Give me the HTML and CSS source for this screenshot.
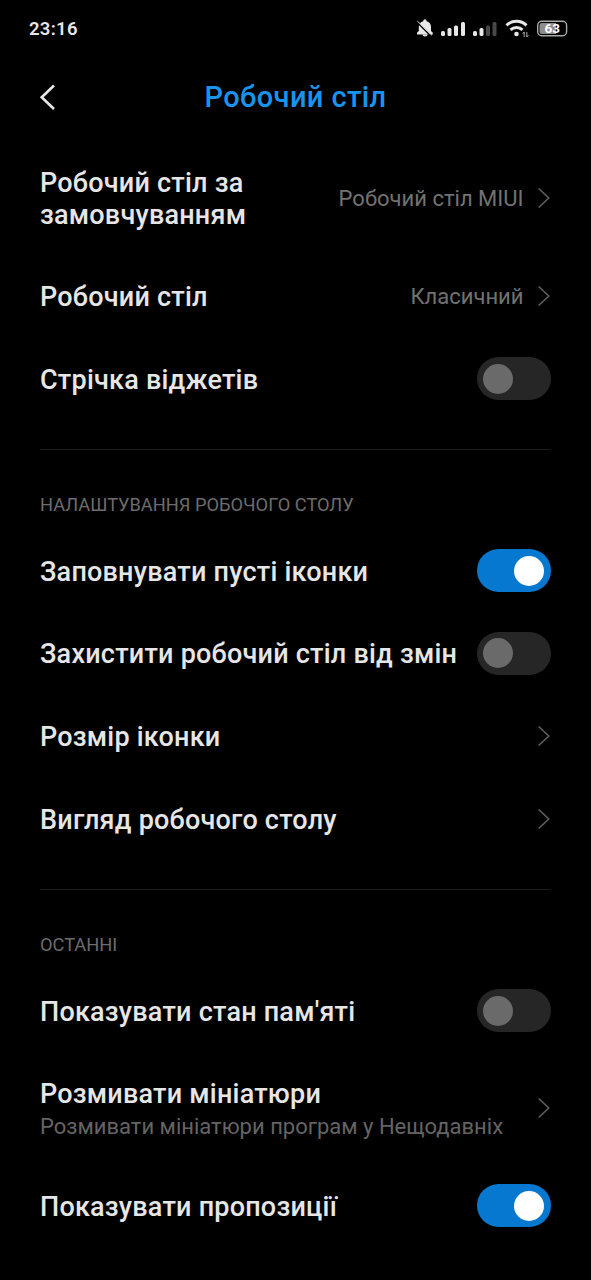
FILE: index.html
```html
<!DOCTYPE html>
<html lang="uk">
<head>
<meta charset="utf-8">
<title>Робочий стіл</title>
<link rel="stylesheet" href="styles.css">
</head>
<body>
<svg class="defs" aria-hidden="true">
  <symbol id="chevron" viewBox="0 0 14 22"><path d="M1.700 1.500 11.700 11 1.700 20.500" fill="none" stroke="currentColor" stroke-width="1.700"/></symbol>
</svg>
<div class="status">
  <span class="time">23:16</span>
  <svg class="indicators" width="156" height="24" viewBox="0 0 156 24">
    <g fill="#e8e8e8">
      <path d="M3.800 15V11a6 6 0 0 1 4.500-5.800V4.800a1.600 1.600 0 0 1 3.200 0v.4a6 6 0 0 1 4.500 5.800v4l1.800 1.800v1.600H2v-1.600z"/>
      <path d="M7.500 18.400h5a2.500 2 0 0 1-5 0z"/>
      <path d="M2 6.300 15.500 19.800" stroke="#000" stroke-width="1.300"/>
      <path d="M2.300 5 17 19.300" stroke="#d0d0d0" stroke-width="1"/>
      <rect x="26" y="15" width="4" height="5" rx="1.500"/>
      <rect x="32.500" y="12" width="4" height="8" rx="1.500"/>
      <rect x="39" y="9.500" width="4" height="10.500" rx="1.500"/>
      <rect x="46" y="6" width="4" height="14" rx="1.500"/>
      <rect x="58" y="15" width="4" height="5" rx="1.500"/>
      <rect x="64.500" y="12" width="4" height="8" rx="1.500"/>
      <rect x="71" y="9.500" width="4" height="10.500" rx="1.500" fill="#484848"/>
      <rect x="77.500" y="6" width="4" height="14" rx="1.500" fill="#484848"/>
      <circle cx="101.500" cy="18" r="2.300"/>
    </g>
    <g fill="none" stroke="#e8e8e8" stroke-width="3">
      <path d="M91.500 9.300a14.500 14.500 0 0 1 20 0"/>
      <path d="M95.500 13.800a9 9 0 0 1 12 0"/>
    </g>
    <path d="M109.200 21v-5l-1.500 1.800M111.800 16v5l1.500-1.800" fill="none" stroke="#aaa" stroke-width="1"/>
    <rect x="122.700" y="5.200" width="28.900" height="14.600" rx="4" fill="none" stroke="#aaa" stroke-width="1.400"/>
    <path d="M127 7h14v11h-14a2.500 2.500 0 0 1-2.500-2.500v-6a2.500 2.500 0 0 1 2.500-2.500z" fill="#8c8c8c"/>
    <text class="charge" x="137.300" y="16.900" text-anchor="middle">63</text>
  </svg>
</div>
<header class="header">
  <svg class="back" width="18" height="28" viewBox="0 0 18 28"><path d="M15 2.500 2.700 14.300 15 26" fill="none" stroke="#e8e8e8" stroke-width="2.600"/></svg>
  <h1 class="title">Робочий стіл</h1>
</header>
<main class="settings">
  <section class="group">
    <div class="row tall"><div class="name">Робочий стіл за<br>замовчуванням</div><span class="value">Робочий стіл MIUI</span><svg class="chevron"><use href="#chevron"/></svg></div>
    <div class="row"><div class="name">Робочий стіл</div><span class="value">Класичний</span><svg class="chevron"><use href="#chevron"/></svg></div>
    <div class="row"><div class="name">Стрічка віджетів</div><span class="toggle"></span></div>
  </section>
  <section class="group">
    <h2 class="label">НАЛАШТУВАННЯ РОБОЧОГО СТОЛУ</h2>
    <div class="row"><div class="name">Заповнувати пусті іконки</div><span class="toggle on"></span></div>
    <div class="row"><div class="name">Захистити робочий стіл від змін</div><span class="toggle"></span></div>
    <div class="row"><div class="name">Розмір іконки</div><svg class="chevron"><use href="#chevron"/></svg></div>
    <div class="row"><div class="name">Вигляд робочого столу</div><svg class="chevron"><use href="#chevron"/></svg></div>
  </section>
  <section class="group">
    <h2 class="label">ОСТАННІ</h2>
    <div class="row"><div class="name">Показувати стан пам'яті</div><span class="toggle"></span></div>
    <div class="row detailed"><div class="name">Розмивати мініатюри<div class="note">Розмивати мініатюри програм у Нещодавніх</div></div><svg class="chevron"><use href="#chevron"/></svg></div>
    <div class="row"><div class="name">Показувати пропозиції</div><span class="toggle on"></span></div>
  </section>
</main>
</body>
</html>
```
FILE: styles.css
```css
* { box-sizing: border-box; }
body {
  margin: 0;
  height: 1280px;
  overflow: hidden;
  background: #000;
  color: #e6e6e6;
  font-family: Roboto, "Noto Sans", sans-serif;
}
.defs { display: none; }
.status {
  display: flex;
  align-items: center;
  justify-content: space-between;
  height: 56px;
  padding: 0 20px 0 29px;
}
.time { padding-top: 1px; font-size: 18.500px; font-weight: 600; letter-spacing: 0.3px; }
.indicators { display: block; margin-bottom: 1px; }
.charge { font-size: 13.500px; font-weight: 700; fill: #fff; }
.header {
  display: grid;
  grid-template-columns: 18px 1fr 18px;
  align-items: center;
  height: 85px;
  padding: 0 39px 4px;
}
.title {
  margin: 0;
  padding-top: 1px;
  text-align: center;
  font-size: 29px;
  font-weight: 500;
  letter-spacing: 0.4px;
  color: #1994ed;
}
.group { margin: 0 40px; }
.group + .group { margin-top: 29px; border-top: 1px solid #1e1e1e; }
.row { display: flex; align-items: center; height: 82.700px; }
.row.tall { height: 113.500px; }
.row.detailed { height: 112px; }
.name {
  flex: 1;
  padding-top: 2px;
  white-space: nowrap;
  font-size: 27px;
  font-weight: 500;
  line-height: 32px;
  letter-spacing: 0.22px;
}
.row.detailed .name { padding-top: 5px; }
.value {
  margin-right: 13.500px;
  padding-top: 1px;
  font-size: 22px;
  color: #727272;
}
.note {
  padding-top: 1px;
  font-size: 22px;
  font-weight: 400;
  letter-spacing: 0;
  color: #646464;
}
.chevron { width: 14px; height: 22px; color: #5c5c5c; }
.label {
  margin: 0;
  height: 79.500px;
  padding-top: 43px;
  font-size: 18.250px;
  font-weight: 400;
  line-height: 24px;
  color: #6c6c6c;
}
.toggle {
  display: flex;
  flex: none;
  width: 74px;
  height: 43px;
  margin-right: 0.500px;
  padding: 6.500px;
  border-radius: 22px;
  background: #262626;
}
.toggle::before {
  content: "";
  width: 30px;
  height: 30px;
  border-radius: 50%;
  background: #6a6a6a;
}
.toggle.on { justify-content: flex-end; background: #0678d0; }
.toggle.on::before { background: #fff; }
```
